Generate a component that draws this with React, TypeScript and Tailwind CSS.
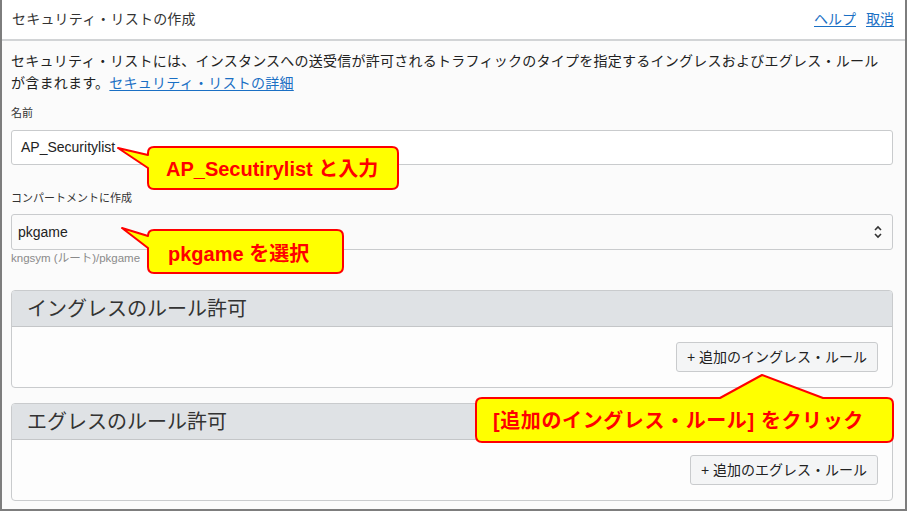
import React from "react";

const FONT = "font-['Liberation_Sans','Noto_Sans_CJK_JP',sans-serif]";

function Chevrons() {
  return (
    <svg width="10" height="14" viewBox="0 0 10 14" fill="none">
      <path d="M2 5 L5 2 L8 5" stroke="#333" strokeWidth="1.6" />
      <path d="M2 9 L5 12 L8 9" stroke="#333" strokeWidth="1.6" />
    </svg>
  );
}

function RulePanel({ title, button }: { title: string; button: string }) {
  return (
    <div className="overflow-hidden rounded-[4px] border border-[#c9cbcd] bg-[#fdfdfd]">
      <div className="flex h-[36px] items-center border-b border-[#c4c6c8] bg-[#dfe2e5] px-[15px]">
        <span className="text-[20px] leading-none text-[#333]">{title}</span>
      </div>
      <div className="flex justify-end px-[14px] py-[15px]">
        <button className="h-[30px] rounded-[3px] border border-[#c9cbcd] bg-[#f4f5f6] px-[10px] text-[14px] text-[#222]">
          {button}
        </button>
      </div>
    </div>
  );
}

export default function App() {
  return (
    <div
      className={`${FONT} relative h-[513px] w-[907px] overflow-hidden bg-white`}
    >
      <div className="h-[511px] w-[907px] border-x-2 border-b-2 border-[#7d7d7d] bg-[#fbfbfb]">
        {/* ヘッダー */}
        <div className="flex h-[41px] items-center justify-between border-b-2 border-[#d2d4d6] bg-white pl-[10px] pr-[11px]">
          <span className="text-[14px] tracking-[0.2px] text-[#333]">
            セキュリティ・リストの作成
          </span>
          <div className="flex gap-[10px] text-[14px] text-[#1a6fc4]">
            <a className="underline underline-offset-2">ヘルプ</a>
            <a className="underline underline-offset-2">取消</a>
          </div>
        </div>

        <div className="pl-[9px] pr-[12px]">
          <p className="pt-[9px] text-[14px] leading-[22px] tracking-[0.25px] text-[#222]">
            セキュリティ・リストには、インスタンスへの送受信が許可されるトラフィックのタイプを指定するイングレスおよびエグレス・ルール
            <br />
            が含まれます。
            <a className="text-[#1a6fc4] underline underline-offset-2">
              セキュリティ・リストの詳細
            </a>
          </p>

          <p className="mt-[11px] text-[11px] leading-[16px] text-[#333]">名前</p>
          <div className="mt-[9px] flex h-[35px] items-center rounded-[3px] border border-[#c9cbcd] bg-white pl-[9px] text-[14px] text-[#222]">
            AP_Securitylist
          </div>

          <p className="mt-[25px] text-[11px] leading-[16px] text-[#333]">
            コンパートメントに作成
          </p>
          <div className="mt-[8px] flex h-[36px] items-center justify-between rounded-[3px] border border-[#c9cbcd] bg-[#fafafa] pl-[6px] pr-[9px] text-[14px] text-[#222]">
            <span>pkgame</span>
            <Chevrons />
          </div>
          <p className="mt-[1px] text-[11.5px] leading-[14px] text-[#8a8a8a]">
            kngsym (ルート)/pkgame
          </p>

          <div className="mt-[25px] flex flex-col gap-[15px]">
            <RulePanel title="イングレスのルール許可" button="+ 追加のイングレス・ルール" />
            <RulePanel title="エグレスのルール許可" button="+ 追加のエグレス・ルール" />
          </div>
        </div>
      </div>

      {/* 吹き出し */}
      <svg
        className="pointer-events-none absolute left-0 top-0"
        width="907"
        height="513"
        viewBox="0 0 907 513"
      >
        <g fill="#ffff00" stroke="#ff0000" strokeWidth="2" strokeLinejoin="round">
          <path d="M154 147 H392 Q398 147 398 153 V183 Q398 189 392 189 H154 Q148 189 148 183 V168 L118 148 L148 155 V153 Q148 147 154 147 Z" />
          <path d="M154 230 H337 Q343 230 343 236 V267 Q343 273 337 273 H154 Q148 273 148 267 V248 L122 228 L148 236 Q148 230 154 230 Z" />
          <path d="M482 398 H720 L762 375 L823 398 H887 Q893 398 893 404 V436 Q893 442 887 442 H482 Q476 442 476 436 V404 Q476 398 482 398 Z" />
        </g>
      </svg>
      <div className="absolute left-[148px] top-[148px] flex h-[42px] w-[250px] items-center pl-[18px] text-[20px] font-bold text-[#ff0000]">
        AP_Secutirylist と入力
      </div>
      <div className="absolute left-[148px] top-[232px] flex h-[43px] w-[195px] items-center pl-[20px] text-[20px] font-bold text-[#ff0000]">
        pkgame を選択
      </div>
      <div className="absolute left-[476px] top-[399px] flex h-[44px] w-[417px] items-center pl-[17px] text-[20px] font-bold tracking-[0.6px] text-[#ff0000]">
        [追加のイングレス・ルール] をクリック
      </div>
    </div>
  );
}
